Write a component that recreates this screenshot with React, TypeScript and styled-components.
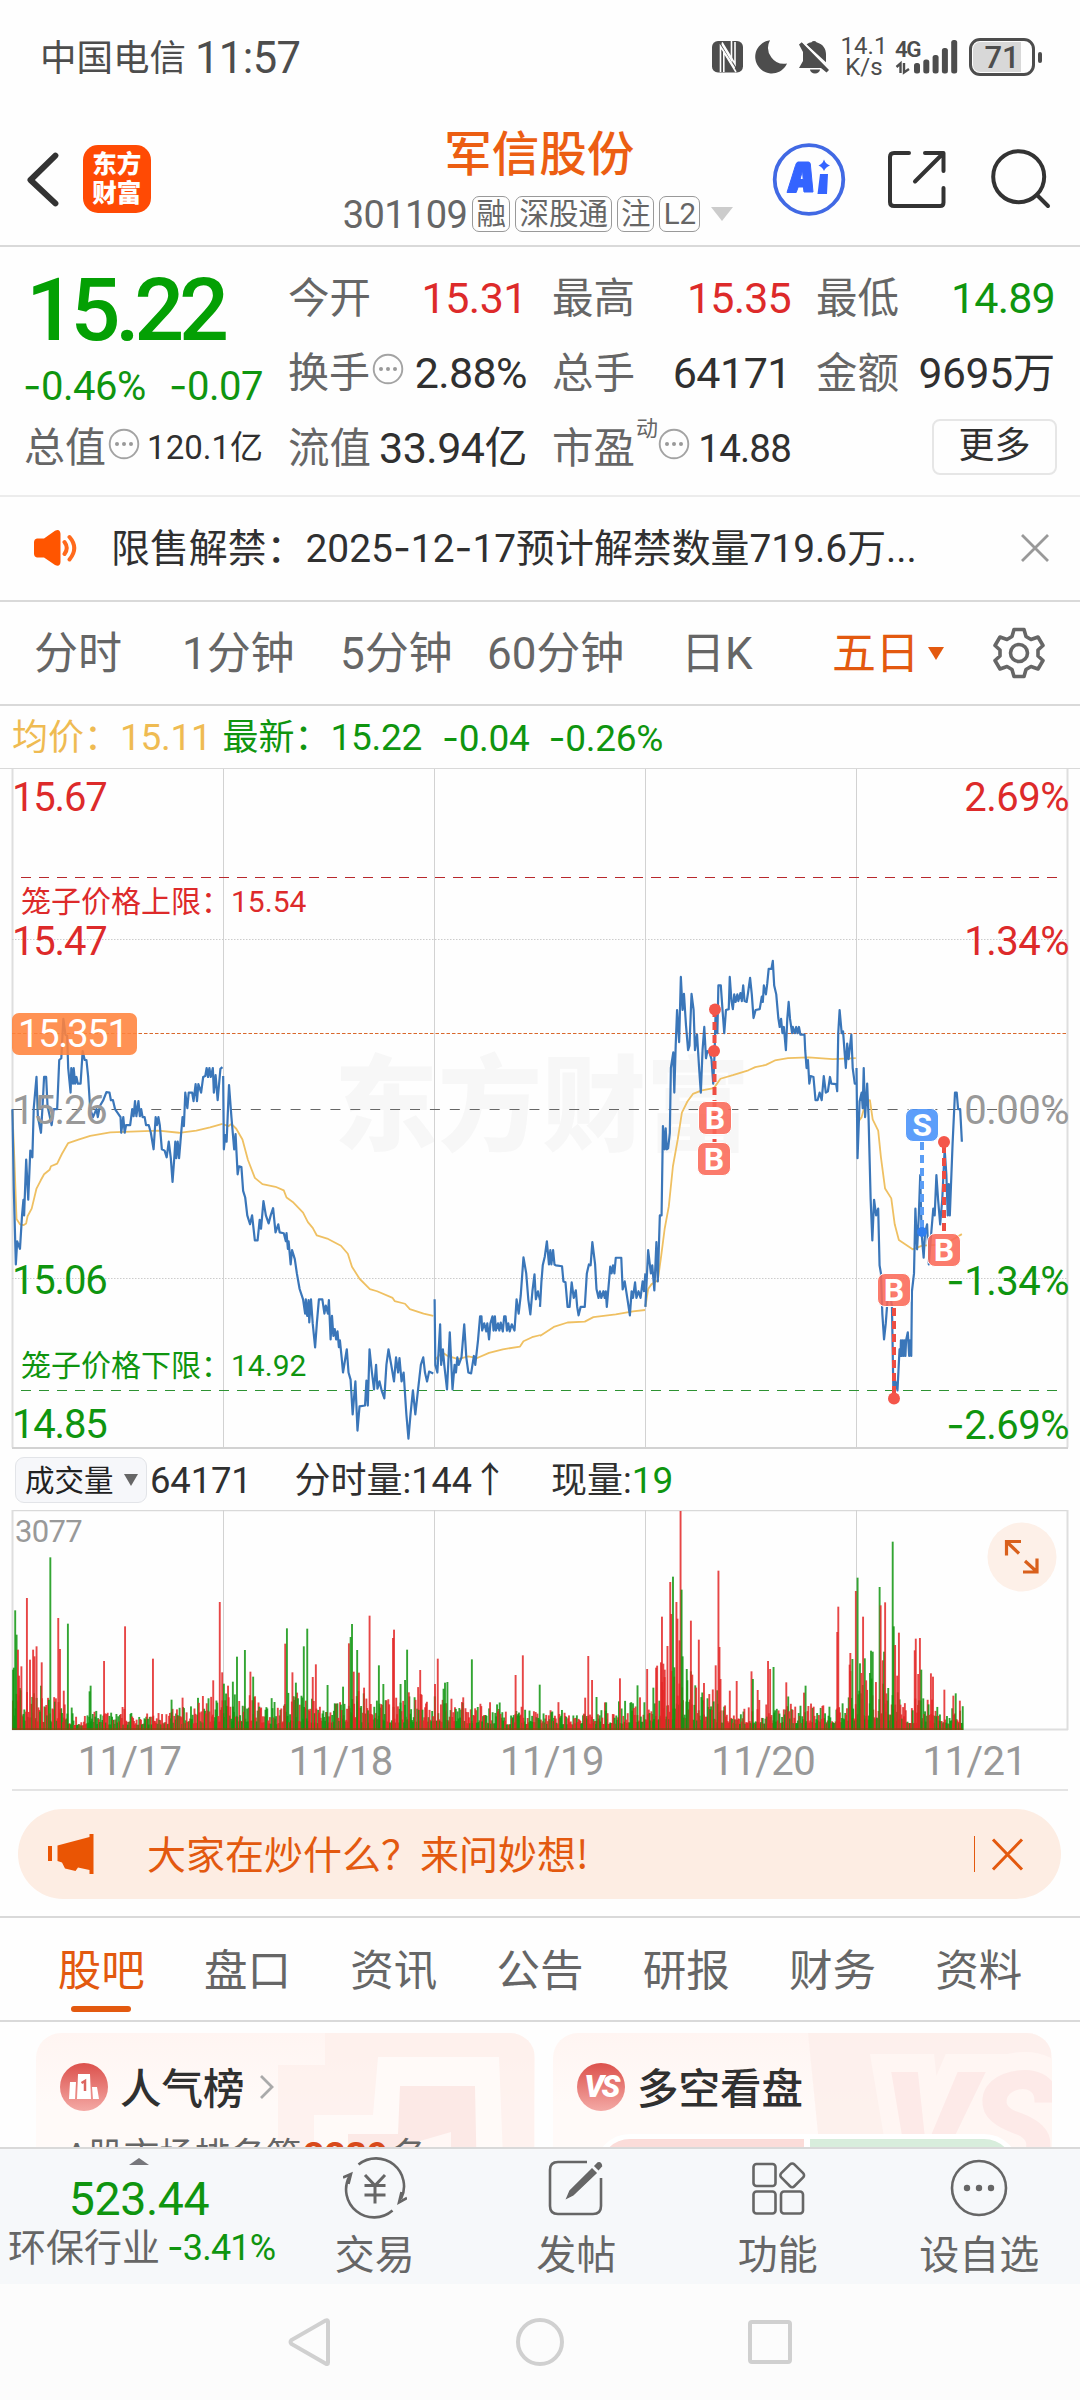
import React from "react";
import styled, { createGlobalStyle } from "styled-components";

const RED = "#dd2a2a";
const GREEN = "#0f950f";
const ORANGE = "#e3590f";
const GREY = "#666";
const DARK = "#303030";
const LINE = "#d9d9d9";

const Global = createGlobalStyle`
  html, body { margin: 0; padding: 0; background: #fefefe; }
  * { box-sizing: border-box; }
`;

const Page = styled.div`
  width: 1080px;
  height: 2400px;
  overflow: hidden;
  display: flex;
  flex-direction: column;
  background: #fefefe;
  font-family: Roboto, "Noto Sans CJK SC", sans-serif;
  color: ${DARK};
  line-height: 1;
  white-space: nowrap;
`;

const Txt = styled.span<{ s: number; c?: string; ls?: number; w?: number; ml?: number }>`
  font-size: ${(p) => p.s}px;
  color: ${(p) => p.c || "inherit"};
  letter-spacing: ${(p) => p.ls || 0}px;
  font-weight: ${(p) => p.w || 400};
  margin-left: ${(p) => p.ml || 0}px;
  padding-top: 3px;
  line-height: 1.1;
  white-space: pre;
`;

const Dash = styled.span`
  font-family: Inter, sans-serif;
`;

const withDashes = (t: string) =>
  t.split(/(-)/).map((p, i) => (p === "-" ? <Dash key={i}>-</Dash> : p));

type TProps = { children: string; s: number; c?: string; ls?: number; w?: number; ml?: number };
const T = ({ children, ...rest }: TProps) => <Txt {...rest}>{withDashes(children)}</Txt>;

/* ---------- status bar ---------- */

const StatusBar = styled.div`
  height: 115px;
  padding: 0 38px 0 40px;
  display: flex;
  align-items: center;
  justify-content: space-between;
  color: #4d4d4d;
`;
const StatusSide = styled.div`
  display: flex;
  align-items: center;
`;
const Speed = styled.div`
  width: 40px;
  height: 42px;
  margin-left: 13px;
  display: flex;
  flex-direction: column;
  align-items: center;
  justify-content: space-between;
  font-size: 24px;
  line-height: 21px;
`;
const Signal = styled.div`
  width: 64px;
  height: 36px;
  margin-left: 11px;
  position: relative;
`;
const SignalText = styled.span`
  position: absolute;
  left: 0;
  top: -1px;
  font-size: 22.5px;
  font-weight: 600;
  letter-spacing: -1.5px;
  line-height: 22px;
`;
const Battery = styled.div`
  width: 66px;
  height: 38px;
  margin-left: 10px;
  border: 3px solid #4d4d4d;
  border-radius: 11px;
  padding: 1px;
`;
const BatteryFill = styled.div`
  height: 100%;
  border-radius: 7px;
  background: linear-gradient(90deg, #d8d8d8 83%, transparent 83%);
  display: flex;
  align-items: center;
  justify-content: center;
  font-size: 31px;
  font-weight: 500;
`;
const BatteryNub = styled.div`
  width: 4px;
  height: 11px;
  margin-left: 3px;
  border-radius: 2px;
  background: #4d4d4d;
`;

/* ---------- header ---------- */

const Header = styled.header`
  height: 132px;
  border-bottom: 2px solid ${LINE};
  display: flex;
  align-items: flex-start;
  padding: 0 25px 0 27px;
`;
const Logo = styled.div`
  width: 68px;
  height: 68px;
  margin: 30px 0 0 24px;
  border-radius: 15px;
  background: #ff4a04;
  color: #fff;
  font-size: 24.5px;
  line-height: 29px;
  font-weight: 900;
  display: flex;
  flex-direction: column;
  align-items: center;
  justify-content: center;
`;
const TitleBlock = styled.div`
  width: 430px;
  margin: 13px 0 0 170px;
  display: flex;
  flex-direction: column;
  align-items: center;
`;
const StockName = styled.div`
  height: 54px;
  font-size: 47.5px;
  line-height: 54px;
  font-weight: 500;
  color: #ec5e12;
  margin-left: 9px;
`;
const CodeRow = styled.div`
  height: 36px;
  margin-top: 14px;
  margin-left: 8px;
  width: 392px;
  display: flex;
  align-items: center;
  gap: 5px;
`;
const Badge = styled.span<{ w: number }>`
  width: ${(p) => p.w}px;
  height: 36px;
  border: 1px solid #999;
  border-radius: 7px;
  color: ${GREY};
  font-size: 29.5px;
  line-height: 35px;
  text-align: center;
`;
const DownCaret = styled.span<{ w: number; h: number; c: string; ml: number }>`
  width: 0;
  height: 0;
  margin-left: ${(p) => p.ml}px;
  border-left: ${(p) => p.w / 2}px solid transparent;
  border-right: ${(p) => p.w / 2}px solid transparent;
  border-top: ${(p) => p.h}px solid ${(p) => p.c};
`;

/* ---------- quote ---------- */

const Quote = styled.section`
  height: 250px;
  padding: 13px 25px 0 26px;
  border-bottom: 2px solid #ececec;
  display: grid;
  grid-template-columns: 237px 238px 238px 238px;
  column-gap: 26px;
`;
const QuoteCol = styled.div`
  display: flex;
  flex-direction: column;
`;
const QuoteRow = styled.div<{ h?: number }>`
  height: ${(p) => p.h || 75}px;
  display: flex;
  align-items: center;
  justify-content: space-between;
`;
const LabelBox = styled.div`
  display: flex;
  align-items: center;
  margin-left: -1px;
`;
const Sup = styled.span`
  align-self: flex-start;
  font-size: 22px;
  color: ${GREY};
  line-height: 22px;
  margin: -5px -2px 0 1px;
`;
const MoreButton = styled.button`
  width: 125px;
  height: 56px;
  margin: 0 -2px 0 auto;
  border: 2px solid #e6e6e6;
  border-radius: 8px;
  background: #fefefe;
  font: 400 36px/40px Roboto, "Noto Sans CJK SC", sans-serif;
  color: ${DARK};
  padding: 0 0 3px;
`;

/* ---------- notice / tabs / legend ---------- */

const Notice = styled.section`
  height: 105px;
  border-bottom: 2px solid ${LINE};
  padding: 0 31px 0 33px;
  display: flex;
  align-items: center;
`;
const NoticeText = styled.div`
  flex: 1;
  margin-left: 32px;
  font-size: 38.9px;
  line-height: 48px;
`;
const PeriodTabs = styled.nav`
  height: 104px;
  border-bottom: 2px solid ${LINE};
  padding: 0 36px 0 34px;
  display: flex;
  align-items: center;
`;
const Period = styled.div<{ w: number; on?: boolean }>`
  width: ${(p) => p.w}px;
  flex: none;
  display: flex;
  align-items: center;
  padding-top: 2px;
  font-size: 44px;
  letter-spacing: ${(p) => (p.on ? -0.6 : -0.1)}px;
  font-weight: 400;
  color: ${(p) => (p.on ? ORANGE : GREY)};
`;
const Legend = styled.div`
  height: 62px;
  padding: 1px 12px 0;
  display: flex;
  align-items: center;
`;

/* ---------- charts ---------- */

const ChartBox = styled.section`
  position: relative;
  height: 681px;
`;
const AxisLabel = styled.span<{ y: number; c: string; side?: "l" | "r"; x?: number; s?: number }>`
  position: absolute;
  top: ${(p) => p.y - 768 - 20.5}px;
  ${(p) => (p.side === "r" ? `right: ${p.x ?? 11}px;` : `left: ${p.x ?? 12}px;`)}
  font-size: ${(p) => p.s || 40}px;
  letter-spacing: ${(p) => (p.s ? 0 : p.side === "r" ? -0.5 : -1.2)}px;
  line-height: 44px;
  color: ${(p) => p.c};
`;
const PriceTag = styled.span`
  position: absolute;
  left: 12px;
  top: 245px;
  width: 125px;
  height: 42px;
  border-radius: 7px;
  background: rgba(255, 131, 60, 0.88);
  color: #fff;
  font-size: 38px;
  letter-spacing: -1.2px;
  line-height: 43px;
  padding-left: 6px;
`;
const Watermark = styled.span`
  position: absolute;
  left: 334px;
  top: 285px;
  font-size: 104px;
  line-height: 110px;
  font-weight: 900;
  color: #f7f7f7;
`;
const Trade = styled.span<{ x: number; y: number; buy?: boolean }>`
  position: absolute;
  left: ${(p) => p.x}px;
  top: ${(p) => p.y - 768}px;
  width: 34px;
  height: 34px;
  border: 1px solid #fff;
  border-radius: 8px;
  background: ${(p) => (p.buy ? "rgba(250,105,88,.88)" : "rgba(75,148,250,.9)")};
  color: #fff;
  font: 700 32px/33px Roboto, sans-serif;
  text-align: center;
`;
const VolumeHead = styled.div`
  height: 62px;
  padding: 1px 0 0 15px;
  display: flex;
  align-items: center;
`;
const VolumeSelect = styled.button`
  width: 132px;
  height: 46px;
  border: 1.5px solid #e2e4e8;
  border-radius: 9px;
  background: #f6f7fa;
  padding: 0 0 3px 9px;
  display: flex;
  align-items: center;
  font: 400 29.5px/36px "Noto Sans CJK SC", sans-serif;
  color: #222;
`;
const SelectCaret = styled.i`
  margin: 3px 0 0 10px;
  border-left: 7.5px solid transparent;
  border-right: 7.5px solid transparent;
  border-top: 12px solid #666;
`;
const VolumeBox = styled.div`
  position: relative;
  height: 221px;
`;
const VolumeMax = styled.span`
  position: absolute;
  left: 15px;
  top: 5px;
  font-size: 31px;
  line-height: 34px;
  letter-spacing: -0.7px;
  color: #999;
`;
const Expand = styled.svg`
  position: absolute;
  left: 987px;
  top: 12px;
`;
const Dates = styled.div`
  height: 60px;
  margin: 0 0 0 12px;
  padding: 2px 0 0 12px;
  display: flex;
  align-items: center;
  color: #999;
  font-size: 40px;
`;
const DateCell = styled.span`
  flex: 1;
  text-align: center;
  letter-spacing: -0.5px;
`;
const DateRule = styled.div`
  height: 2px;
  margin: -2px 12px 0;
  background: #e4e4e4;
`;

/* ---------- banner and content tabs ---------- */

const Banner = styled.section`
  height: 90px;
  margin: 18px 19px 17px 18px;
  border-radius: 45px;
  background: #fdede3;
  padding: 0 37px 0 29px;
  display: flex;
  align-items: center;
  color: ${ORANGE};
`;
const BannerText = styled.div`
  flex: 1;
  margin-left: 52px;
  font-size: 39px;
  line-height: 46px;
  font-family: "Noto Sans CJK SC", sans-serif;
  padding-bottom: 4px;
`;
const BannerRule = styled.span`
  width: 1px;
  height: 36px;
  margin-right: 16px;
  background: ${ORANGE};
`;
const ContentTabs = styled.nav`
  height: 106px;
  border-top: 2px solid ${LINE};
  border-bottom: 2px solid ${LINE};
  padding: 0 28px;
  display: flex;
`;
const ContentTab = styled.div<{ on?: boolean }>`
  flex: 1;
  display: flex;
  flex-direction: column;
  align-items: center;
  padding-top: 29px;
  font-size: 43.5px;
  line-height: 50px;
  color: ${(p) => (p.on ? ORANGE : GREY)};
`;
const Underline = styled.i`
  width: 60px;
  height: 6px;
  margin-top: 9px;
  border-radius: 3px;
  background: ${ORANGE};
`;
const Cards = styled.section`
  height: 125px;
  overflow: hidden;
  padding: 11px 28px 0 36px;
  display: flex;
  gap: 18px;
`;
const Card = styled.article`
  flex: 1;
  height: 200px;
  position: relative;
  overflow: hidden;
  border-radius: 25px;
  background: linear-gradient(180deg, #fff5f2 0, #fffaf8 70px);
  padding: 29px 24px 0;
`;
const CardArt = styled.svg`
  position: absolute;
  inset: 0;
`;
const CardHead = styled.div`
  position: relative;
  height: 50px;
  display: flex;
  align-items: center;
`;
const CardTitle = styled.span`
  font-size: 41.5px;
  line-height: 50px;
  font-weight: 500;
  margin: -3px 14px 0 12px;
  font-family: "Noto Sans CJK SC", sans-serif;
`;
const RankLine = styled.div`
  position: relative;
  margin: 23px 0 0 5px;
  font-size: 35.5px;
  line-height: 42px;
  color: ${GREY};
`;
const RankNumber = styled.b`
  color: #d84a1b;
  font-weight: 700;
  margin: 0 3px 0 2px;
  font-size: 37px;
`;
const VoteBar = styled.div`
  position: relative;
  height: 70px;
  width: 424px;
  margin: 22px 0 0 18px;
  border: 5px solid #fff;
  border-radius: 40px;
  background: #fff;
  overflow: hidden;
  display: flex;
  gap: 6px;
`;
const VoteHalf = styled.div<{ c: string }>`
  flex: 1;
  background: ${(p) => p.c};
`;
const Disc = styled.span`
  width: 48px;
  height: 48px;
  border-radius: 50%;
  background: linear-gradient(180deg, #dc514c, #f4a9a5);
  display: flex;
  align-items: center;
  justify-content: center;
  color: #fff;
  font: italic 900 31px/48px Roboto, sans-serif;
  letter-spacing: -2.5px;
`;
const VsGhost = styled.span`
  position: absolute;
  right: 0;
  top: 21px;
  font: italic 900 146px/146px Roboto, sans-serif;
  letter-spacing: -6px;
  color: #fdeae8;
  -webkit-text-stroke: 36px #fff6f3;
  paint-order: stroke fill;
`;

/* ---------- bottom ---------- */

const ActionBar = styled.footer`
  height: 137px;
  border-top: 2px solid ${LINE};
  background: #f6f8fa;
  display: flex;
`;
const Industry = styled.div`
  width: 274px;
  display: flex;
  flex-direction: column;
  align-items: center;
`;
const UpCaret = styled.span`
  width: 0;
  height: 0;
  margin: 9px 0 0 3px;
  border-left: 10.5px solid transparent;
  border-right: 10.5px solid transparent;
  border-bottom: 7px solid #77777c;
`;
const IndustryValue = styled.div`
  margin: 9px 0 0 4px;
  font-size: 46.5px;
  letter-spacing: -0.4px;
  line-height: 50px;
  color: ${GREEN};
`;
const IndustryRow = styled.div`
  height: 46px;
  padding-left: 8px;
  align-self: flex-start;
  display: flex;
  align-items: center;
`;
const Action = styled.div`
  flex: 1;
  display: flex;
  flex-direction: column;
  align-items: center;
  padding-top: 7px;
  font-size: 40px;
  line-height: 48px;
  color: ${GREY};
`;
const ActionText = styled.span`
  margin-top: 8px;
  font-family: "Noto Sans CJK SC", sans-serif;
`;
const SystemNav = styled.div`
  height: 116px;
  background: #fcfcfc;
  display: flex;
  justify-content: center;
  align-items: center;
  gap: 180px;
  padding-right: 1px;
`;

/* ---------- data ---------- */

/* Price and average traces, each half digitised on its own 1568-unit grid. */
const PRICE_LEFT = [
  "36,782 40,960 46,1130 50,1078 58,1095 64,1020 68,985 70,1020 76,895 82,985 88,875 94,890 98,780 106,710 110,800 119,835 124,770 128,710 134,710 138,775 150,818 156,782 166,782 172,672 178,668 184,580 190,615 195,618 198,690 205,745 207,690 212,725 214,690 218,725 222,710 226,725 234,725 240,652 246,672 251,672 256,710 262,782 270,800 280,782 284,800 290,775 300,762 309,744 318,745 322,762 328,762 334,782 350,800 352,835 358,800 362,835 366,818 378,818 384,782 388,798 392,764 396,798 402,764 406,798 410,782 414,800 420,800 424,818 432,818 438,835 446,872 452,800 456,818 460,800 464,818 470,872 478,875 484,890 490,855 496,892 501,945 506,892 509,855 512,892 516,855 520,892 524,855 530,800 534,820 538,745 544,780 548,745 558,745 562,764 568,726 572,764 576,726 584,745 590,710 596,708 600,690 604,710 608,690 612,710 618,690 621,745 626,706 632,762 640,692 646,688",
  "648,708 650,872 654,840 658,855 665,728 672,800 680,872 684,838 690,928 694,910 701,912 706,965 712,980 718,1020 726,1040 732,1020 740,1076 748,1076 754,1030 758,1050 765,988 772,1020 780,1038 786,1020 793,1004 800,1058 808,1040 812,1058 824,1060 830,1078 832,1060 836,1095 838,1078 844,1130 848,1098 856,1118 862,1150 870,1185 880,1208 886,1240 888,1208 892,1245 896,1210 898,1260 903,1208 908,1262 915,1316 920,1262 926,1208 936,1208 942,1240 946,1222 952,1240 955,1210 960,1298 964,1245 968,1290 972,1275 976,1298 980,1280 984,1315 987,1300 992,1338 996,1372 1007,1320 1012,1372 1018,1388 1024,1466 1032,1392 1038,1502 1044,1448 1060,1446 1064,1390 1068,1446 1073,1320 1080,1372 1086,1410 1092,1355 1096,1408 1102,1392 1108,1412 1116,1430 1122,1355 1128,1320 1136,1355 1144,1392 1150,1338 1156,1372 1160,1340 1166,1392 1172,1372 1180,1466 1186,1520 1192,1466 1199,1412 1206,1466 1214,1410 1222,1355 1229,1338 1234,1372 1240,1392 1246,1370 1258,1374",
  "1262,1208 1264,1355 1270,1372 1278,1264 1281,1355 1286,1320 1290,1355 1298,1410 1306,1282 1314,1410 1320,1355 1324,1372 1328,1338 1332,1355 1340,1338 1348,1264 1354,1338 1360,1372 1368,1374 1376,1335 1380,1355 1388,1300 1394,1246 1398,1246 1400,1278 1406,1262 1412,1280 1415,1262 1420,1298 1424,1262 1430,1246 1433,1278 1437,1246 1440,1278 1446,1262 1450,1278 1454,1260 1460,1280 1464,1246 1468,1246 1472,1278 1476,1262 1480,1280 1486,1264 1494,1278 1500,1208 1506,1240 1512,1200 1520,1114 1528,1150 1534,1208 1540,1242 1546,1190 1552,1152 1556,1208 1562,1190 1568,1210",
];
const AVG_LEFT = [
  "36,784 42,900 48,1028 58,1040 68,1042 76,1038 80,1022 92,1005 106,960 118,942 128,928 144,918 148,910 166,904 180,882 198,858 230,850 262,842 320,834 400,832 460,830 520,835 570,830 610,823 646,815",
  "648,816 664,820 672,815 686,826 704,850 720,896 740,936 762,950 800,956 824,964 832,980 850,990 880,1014 894,1035 908,1048 920,1065 950,1072 990,1088 1010,1106 1022,1135 1044,1162 1074,1185 1095,1190 1140,1205 1146,1212 1176,1218 1190,1230 1230,1240 1258,1245",
  "1262,1345 1276,1333 1286,1328 1300,1335 1330,1342 1360,1336 1384,1340 1420,1328 1460,1320 1510,1314 1520,1302 1545,1293 1570,1288",
];
const PRICE_RIGHT = [
  "0,1225 4,1170 8,1132 14,1112 20,1078 26,1130 30,1098 33,1130 38,1098 42,1130 46,1132 64,1134 68,1168 74,1170 80,1225 86,1225 92,1170 98,1205 104,1188 108,1225 112,1244 118,1225 130,1225 136,1150 142,1130 147,1132 152,1080 160,1130 164,1185 170,1205 174,1190 178,1205 184,1190 188,1205 191,1190 194,1225 204,1135 208,1150 212,1132 216,1150 220,1115 236,1115 240,1186 246,1168 254,1208 261,1244 266,1190 270,1205 276,1170 280,1205 286,1190 292,1205 298,1168 302,1190 306,1150",
  "306,1225 314,1098 322,1150 326,1132 332,1188 338,1080 342,1168 348,1020 353,1020 357,820 362,872 365,825 368,872 372,870 377,835 380,690 384,670 387,655 390,745 394,640 398,560 404,632 409,486 414,560 418,524 424,595 430,650 434,640 440,524 446,560 450,650 456,615 462,690 467,745 472,650 477,598 482,668 486,652 492,655 498,670 503,725 507,655 510,560 515,612 518,505 525,505 530,560 535,612 540,560 548,558 551,486 556,540 560,558 564,525 568,542 573,525 576,540 582,522 586,540 590,505 594,540 600,542 604,522 610,488 615,525 620,578 626,560 638,558 644,530 647,542 650,505 656,525 660,500 664,468 672,468 676,450 680,505 686,525 692,578 696,598 700,580 704,612 708,598 714,650 718,580 722,542 726,580 732,612 734,598 740,612 744,598 748,612 752,598 756,615 768,615 770,650 774,690 778,672 782,725 786,708 794,710 800,762 806,762 812,745 818,762 824,708 830,745 836,742 842,710 846,725 860,726 863,742 866,612 870,560 876,612 880,608 884,650 888,690 892,635 896,670 904,615 908,690 914,725 919,725",
  "919,690 922,892 928,765 934,745 937,780 940,690 944,800 950,725 954,800 960,982 965,1076 970,985 976,1020 982,1005 986,1132 990,1150 994,1240 999,1298 1004,1262 1010,1200 1016,1190 1022,1225 1026,1410 1032,1392 1038,1412 1044,1320 1047,1335 1048,1300 1051,1335 1053,1300 1056,1335 1058,1300 1061,1335 1063,1300 1068,1282 1072,1335 1074,1300 1078,1335 1080,1190 1086,1150 1090,1005 1095,1096 1100,1020 1104,930 1108,1060 1114,1115 1118,1060 1124,1040 1129,1130 1136,1060 1142,1005 1146,1020 1151,930 1156,985 1162,1040 1168,985 1175,872 1180,930 1184,1020 1187,950 1190,1020 1198,860 1205,745 1210,745 1214,782 1220,782 1225,855",
];
const AVG_RIGHT = [
  "0,1290 40,1270 80,1260 130,1258 155,1248 220,1242 270,1235 305,1232",
  "306,1225 314,1185 324,1174 342,1166 352,1110 362,1050 374,1000 386,910 400,850 412,790 428,765 444,748 470,740 505,735 524,714 560,706 605,695 625,688 656,683 682,673 720,668 780,666 850,670 917,668",
  "920,815 934,800 946,765 958,762 966,805 982,830 990,890 1002,960 1020,982 1030,1040 1042,1075 1082,1096 1110,1088 1150,1086 1190,1078 1225,1062",
];

/* Tall volume bars: [x, top, colour], grid of 2.9037 by 3 units per pixel. */
const R = 0, G = 1;
const PEAKS_LEFT: number[][] = [
  [38, 690, G], [40, 684, G], [44, 512, G], [48, 585, G], [52, 630, R], [55, 708, R], [62, 680, R], [78, 475, R], [87, 660, R], [96, 630, R], [100, 650, R], [106, 620, R], [121, 668, R], [146, 353, G], [169, 535, R], [174, 628, R], [185, 753, R], [197, 552, G], [263, 738, G], [260, 755, G], [302, 664, R], [363, 560, R], [444, 657, R], [498, 780, G], [530, 774, R], [589, 769, R], [619, 722, R], [638, 487, R], [645, 698, R], [650, 732, G], [662, 738, R], [676, 726, G], [688, 651, G], [711, 631, G], [727, 696, R], [735, 711, G], [797, 787, G], [828, 612, R], [833, 566, G], [849, 698, R], [859, 729, G], [882, 620, G], [892, 567, G], [908, 712, R], [917, 674, R], [951, 736, G], [996, 741, G], [1013, 611, R], [1018, 592, G], [1022, 553, G], [1027, 696, R], [1037, 631, G], [1042, 699, R], [1057, 744, R], [1073, 528, R], [1100, 677, G], [1113, 733, G], [1141, 595, R], [1144, 570, R], [1163, 733, G], [1176, 721, G], [1182, 630, G], [1187, 758, R], [1220, 691, R], [1263, 733, R], [1271, 657, R], [1292, 729, G], [1299, 727, G], [1345, 773, R], [1370, 659, G], [1497, 706, R], [1518, 647, R], [1567, 735, G],
];
const PEAKS_RIGHT: number[][] = [
  [140, 649, R], [151, 721, R], [131, 774, R], [164, 772, G], [192, 788, G], [232, 716, R], [283, 737, G], [311, 688, R], [329, 744, G], [337, 684, R], [340, 678, R], [354, 531, R], [351, 668, R], [358, 672, R], [362, 690, R], [370, 619, R], [378, 427, R], [381, 523, R], [386, 411, G], [390, 683, G], [396, 487, R], [399, 537, R], [405, 602, R], [408, 214, R], [411, 450, G], [414, 650, G], [426, 688, G], [438, 543, R], [442, 705, R], [461, 600, R], [476, 730, R], [510, 677, R], [518, 393, R], [521, 622, R], [524, 718, R], [551, 753, R], [571, 724, R], [614, 695, R], [618, 718, G], [632, 751, R], [662, 664, R], [668, 688, R], [678, 682, G], [715, 728, R], [771, 738, G], [866, 501, R], [863, 577, R], [899, 675, R], [901, 640, R], [907, 658, G], [917, 454, R], [922, 414, G], [929, 671, G], [933, 700, R], [938, 531, R], [943, 656, G], [947, 722, R], [958, 700, G], [961, 633, G], [966, 636, G], [986, 442, G], [989, 497, R], [995, 662, R], [999, 636, G], [1002, 488, R], [1011, 745, G], [1024, 306, G], [1027, 560, G], [1031, 616, R], [1037, 708, R], [1042, 579, R], [1088, 632, R], [1091, 597, R], [1098, 703, R], [1103, 595, R], [1107, 690, G], [1135, 701, R], [1141, 711, R], [1174, 750, R], [1200, 768, R], [1207, 761, G], [1219, 783, R],
];

type Bar = { x: number; h: number; c: string };
const COLOURS = ["#e32626", "#0f950f"];

/* Typical bar height along the time axis, as [x, height] stops in pixels. */
const LEVEL: number[][] = [[12, 48], [40, 34], [60, 30], [70, 16], [80, 8], [90, 16], [130, 15], [150, 14], [180, 20], [215, 32], [235, 38], [255, 34], [275, 18], [295, 38], [320, 24], [345, 34], [375, 28], [400, 30], [430, 36], [460, 26], [480, 24], [510, 15], [540, 22], [575, 14], [600, 18], [620, 22], [650, 34], [665, 52], [690, 48], [715, 28], [735, 20], [780, 22], [810, 28], [830, 20], [850, 42], [875, 52], [895, 38], [910, 24], [925, 34], [945, 18], [962, 26]];
const levelAt = (x: number) => {
  for (let i = 1; i < LEVEL.length; i++) {
    if (x <= LEVEL[i][0]) {
      const [x0, a] = LEVEL[i - 1];
      const [x1, b] = LEVEL[i];
      return a + ((b - a) * (x - x0)) / (x1 - x0);
    }
  }
  return 20;
};
const BARS: Bar[] = (() => {
  let seed = 7;
  const rnd = () => {
    seed = (seed * 16807) % 2147483647;
    return seed / 2147483647;
  };
  const out: Bar[] = [];
  for (let x = 12; x < 962; x += 0.877) {
    const r = rnd();
    out.push({ x, h: 3 + levelAt(x) * (0.15 + 0.85 * r * r + (rnd() > 0.88 ? 0.4 : 0)), c: COLOURS[rnd() > 0.55 ? 1 : 0] });
  }
  const add = (list: number[][], off: number) =>
    list.forEach(([x, y, k]) => out.push({ x: off + x / 2.9037 - 0.9, h: (871 - y) / 3, c: COLOURS[k] }));
  add(PEAKS_LEFT, 0);
  add(PEAKS_RIGHT, 540);
  return out;
})();

const DAY_LINES = [223.5, 434.5, 645.5, 856.5];

/* ---------- small drawings ---------- */

const DotsIcon = styled.svg`
  margin: 0 0 6px 2px;
`;
const Dots = () => (
  <DotsIcon width="32" height="32" viewBox="-16 -16 32 32">
    <circle r="14.3" fill="none" stroke="#a3a3a3" strokeWidth="1.9" />
    <g fill="#999"><circle cx="-7" r="2" /><circle r="2" /><circle cx="7" r="2" /></g>
  </DotsIcon>
);

const ChartSvg = styled.svg`
  position: absolute;
  left: 0;
  top: 0;
`;
const BackIcon = styled.svg`
  margin-top: 37px;
`;
const HeaderIcons = styled.svg`
  flex: none;
  margin: 25px 0 0 16px;
`;
const GearIcon = styled.svg`
  flex: none;
  margin-left: 1px;
`;

const Trace = ({ list, c, w }: { list: string[]; c: string; w: number }) => (
  <>
    {list.map((p, i) => (
      <polyline key={i} points={p} fill="none" stroke={c} strokeWidth={w} strokeLinejoin="round" vectorEffect="non-scaling-stroke" />
    ))}
  </>
);

const Stem = ({ x, a, b, c }: { x: number; a: number; b: number; c: string }) => (
  <line x1={x} x2={x} y1={a} y2={b} stroke={c} strokeWidth="4" strokeDasharray="8 5" />
);

const PriceChart = () => (
  <ChartSvg width="1080" height="681" viewBox="0 768 1080 681">
    <line x1="0" x2="1080" y1="768.5" y2="768.5" stroke={LINE} />
    <g stroke="#d2d2d2" strokeWidth="1">
      {DAY_LINES.map((x) => <line key={x} x1={x} x2={x} y1="769" y2="1447" />)}
    </g>
    <path d="M12.5 769V1447.5M1067.5 769V1447.5" stroke="#dedede" strokeWidth="2" />
    <line x1="12" x2="1068" y1="1448" y2="1448" stroke="#d2d2d2" strokeWidth="2" />
    <path d="M12 939.5H1068M12 1278.5H1068" stroke="#ccc" strokeDasharray="1.5 1.5" />
    <line x1="21" x2="1058" y1="877.5" y2="877.5" stroke="#b8282c" strokeDasharray="10 8" />
    <line x1="21" x2="1058" y1="1390.5" y2="1390.5" stroke="#2d9232" strokeDasharray="10 8" />
    <line x1="12" x2="1062" y1="1109.500" y2="1109.500" stroke="#666" strokeDasharray="10 9.900" />
    <line x1="12" x2="1068" y1="1033.500" y2="1033.500" stroke="#d9682c" strokeDasharray="3.500 2" />
    <g transform="translate(0 760) scale(.34439 .44643)">
      <Trace list={AVG_LEFT} c="#efc062" w={1.8} />
      <Trace list={PRICE_LEFT} c="#3a76b9" w={2.2} />
    </g>
    <g transform="translate(540 760) scale(.34439 .44643)">
      <Trace list={AVG_RIGHT} c="#efc062" w={1.8} />
      <Trace list={PRICE_RIGHT} c="#3a76b9" w={2.2} />
    </g>
    <Stem x={714.5} a={1009} b={1142} c="#ee4d42" />
    <Stem x={894} a={1308} b={1394} c="#ee4d42" />
    <Stem x={944} a={1145} b={1234} c="#ee4d42" />
    <Stem x={922} a={1142} b={1230} c="#5a9df5" />
    <g fill="#f4564a">
      <circle cx="715" cy="1009.5" r="6" />
      <circle cx="714" cy="1051" r="6" />
      <circle cx="894" cy="1398.5" r="6" />
      <circle cx="944" cy="1142" r="6" />
    </g>
    <circle cx="922" cy="1232" r="5" fill="#2f7ef0" />
  </ChartSvg>
);

const VolumeChart = () => (
  <ChartSvg width="1080" height="221" viewBox="0 0 1080 221">
    <path d="M12 .5H1068" stroke="#d9d9d9" strokeWidth="1.5" />
    <path d="M12.5 0V220M1067.5 0V220M12 219.5H1068" stroke="#dedede" strokeWidth="2" fill="none" />
    {DAY_LINES.map((x) => <line key={x} x1={x} x2={x} y1="0" y2="220" stroke="#d2d2d2" />)}
    {BARS.map((b, i) => <rect key={i} x={b.x} y={220 - b.h} width="1.9" height={b.h} fill={b.c} fillOpacity={0.85} />)}
    <rect x="12" y="218" width="951" height="2" fill="#7d4a12" fillOpacity=".6" />
  </ChartSvg>
);

const BOTTOM_ICON = { width: 64, height: 64, viewBox: "-32 -32 64 64", fill: "none", stroke: "#666", strokeWidth: 2.6 } as const;

const App = () => (
  <Page>
    <Global />
    <StatusBar>
      <StatusSide>
        <T s={36.5}>中国电信</T>
        <T s={43.5} ls={-0.6} ml={9}>11:57</T>
      </StatusSide>
      <StatusSide>
        <svg width="120" height="36" viewBox="713 41 120 36">
          <rect x="714" y="43" width="31" height="31.5" rx="6" fill="#4d4d4d" />
          <path d="M722.5 74V48.5L736.5 70M724 44.5L737 66V44" fill="none" stroke="#fefefe" strokeWidth="1.6" />
          <path d="M725.8 74V54L738 74M733.5 43V62L724 46" fill="none" stroke="#fefefe" strokeWidth="1.6" />
          <path d="M772 42.3a16.6 16.6 0 1 0 17 23.2A16 16 0 0 1 772 42.3z" fill="#4d4d4d" />
          <path d="M801 46.5l2.8-2.3L831 72l-2.5 2.6L823 70h-22l4-7V54l-4-7.5z" fill="#4d4d4d" />
          <path d="M808.5 46.5c2-1.5 3.5-2 5-2.2a3 3 0 0 1 5 0c7 2 9.5 7 9.5 12v8zM812 71.5h10a5 4 0 0 1-10 0z" fill="#4d4d4d" />
          <path d="M804.5 43.5L831 70" stroke="#fefefe" strokeWidth="1.5" />
        </svg>
        <Speed><span>14.1</span><span>K/s</span></Speed>
        <Signal>
          <SignalText>4G</SignalText>
          <svg width="64" height="36" viewBox="895 40 64 36">
            <path d="M896.5 68l4-3.5V74M904 64v9.5l5-3.5" stroke="#4d4d4d" strokeWidth="2.4" fill="none" />
            <g fill="#4d4d4d">
              <rect x="914" y="64" width="6" height="10.5" rx="2.5" />
              <rect x="923.3" y="60.5" width="6" height="14" rx="2.5" />
              <rect x="932.6" y="56" width="6" height="18.5" rx="2.5" />
              <rect x="941.9" y="49" width="6" height="25.5" rx="2.5" />
              <rect x="951.2" y="41" width="6" height="33.5" rx="2.5" />
            </g>
          </svg>
        </Signal>
        <Battery><BatteryFill>71</BatteryFill></Battery>
        <BatteryNub />
      </StatusSide>
    </StatusBar>

    <Header>
      <BackIcon width="32" height="56" viewBox="0 0 32 56">
        <path d="M28.5 3.5L3.5 28L28.5 51.5" fill="none" stroke="#333" strokeWidth="6" strokeLinecap="round" strokeLinejoin="round" />
      </BackIcon>
      <Logo><span>东方</span><span>财富</span></Logo>
      <TitleBlock>
        <StockName>军信股份</StockName>
        <CodeRow>
          <T s={38} ls={-0.6} c={GREY}>301109</T>
          <Badge w={38}>融</Badge>
          <Badge w={97}>深股通</Badge>
          <Badge w={37}>注</Badge>
          <Badge w={41}>L2</Badge>
          <DownCaret w={22} h={14} c="#ccc" ml={6} />
        </CodeRow>
      </TitleBlock>
      <HeaderIcons width="290" height="80" viewBox="765 140 290 80">
        <circle cx="809" cy="179.5" r="34.3" fill="none" stroke="#4169e4" strokeWidth="3.8" />
        <path fill="#3464ff" fillRule="evenodd" d="M798 162h10.5q1.5 0 1.8 2L813 192h-9l-.6-5h-5.2l-2 5.5H787l8.5-27q1-3.5 2.500-3.500zM802.500 170.500l-2.500 9h3.200z" stroke="#3464ff" strokeWidth="1" strokeLinejoin="round" />
        <path fill="#3464ff" d="M820 174h8l-1 20h-9.500zM824 159.500q1.500 4.500 6 6q-4.500 1.500-6 5.500q-1.500-4-5.500-5.500q4-1.500 5.500-6z" />
        <g fill="none" stroke="#333" strokeWidth="4" strokeLinecap="round" strokeLinejoin="round">
          <path d="M909 153H894q-4 0-4 4V202q0 4 4 4H940q3.500 0 3.500-3.500V188M925 153H943.500V171M943 153.500L915 181.500" />
          <circle cx="1018.700" cy="176.700" r="25.500" />
          <path d="M1037 195L1048 206" />
        </g>
      </HeaderIcons>
    </Header>

    <Quote>
      <QuoteCol>
        <QuoteRow h={98}><T s={88} w={500} c="#04a004" ls={-5.4}>15.22</T></QuoteRow>
        <QuoteRow h={54}><T s={40} c={GREEN} ls={-0.5} ml={-3}>-0.46%</T><T s={40} c={GREEN} ls={-0.5}>-0.07</T></QuoteRow>
        <QuoteRow h={70}>
          <LabelBox><T s={41} c={GREY} ml={-1}>总值</T><Dots /></LabelBox>
          <T s={33}>120.1亿</T>
        </QuoteRow>
      </QuoteCol>
      <QuoteCol>
        <QuoteRow><LabelBox><T s={41.5} c={GREY}>今开</T></LabelBox><T s={43} c={RED} ls={-0.5}>15.31</T></QuoteRow>
        <QuoteRow><LabelBox><T s={41} c={GREY}>换手</T><Dots /></LabelBox><T s={43} ls={-0.6}>2.88%</T></QuoteRow>
        <QuoteRow><LabelBox><T s={41.5} c={GREY}>流值</T></LabelBox><T s={43} ls={-0.5}>33.94亿</T></QuoteRow>
      </QuoteCol>
      <QuoteCol>
        <QuoteRow><LabelBox><T s={41.5} c={GREY}>最高</T></LabelBox><T s={43} c={RED} ls={-0.8}>15.35</T></QuoteRow>
        <QuoteRow><LabelBox><T s={41.5} c={GREY}>总手</T></LabelBox><T s={43} ls={-0.5}>64171</T></QuoteRow>
        <QuoteRow><LabelBox><T s={41.5} c={GREY}>市盈</T><Sup>动</Sup><Dots /></LabelBox><T s={38.5} ls={-0.8}>14.88</T></QuoteRow>
      </QuoteCol>
      <QuoteCol>
        <QuoteRow><LabelBox><T s={41.5} c={GREY}>最低</T></LabelBox><T s={43} c={GREEN} ls={-0.8}>14.89</T></QuoteRow>
        <QuoteRow><LabelBox><T s={41.5} c={GREY}>金额</T></LabelBox><T s={42.5} ls={-0.3}>9695万</T></QuoteRow>
        <QuoteRow><MoreButton>更多</MoreButton></QuoteRow>
      </QuoteCol>
    </Quote>

    <Notice>
      <svg width="46" height="38" viewBox="0 0 46 38">
        <path d="M4 9.5h7L22 1.8q5-2.5 5.5 3V33q-.5 5.500-5.500 3L11 28.500H4q-3-.500-3-4v-11q0-3.500 3-4z" fill="#ff5500" />
        <path d="M31.500 13q4.500 6 0 12M36.500 8q9.500 11 0 22.500" fill="none" stroke="#ff6a1c" strokeWidth="4" strokeLinecap="round" />
      </svg>
      <NoticeText>{withDashes("限售解禁：2025-12-17预计解禁数量719.6万...")}</NoticeText>
      <svg width="28" height="28" viewBox="0 0 28 28"><path d="M1 1L27 27M27 1L1 27" stroke="#999" strokeWidth="2.8" /></svg>
    </Notice>

    <PeriodTabs>
      <Period w={148}>分时</Period>
      <Period w={158}>1分钟</Period>
      <Period w={147}>5分钟</Period>
      <Period w={194}>60分钟</Period>
      <Period w={151}>日K</Period>
      <Period w={160} on>五日<DownCaret w={16} h={13} c={ORANGE} ml={9} /></Period>
      <GearIcon width="52" height="52" viewBox="-26 -26 52 52" fill="none" stroke="#666" strokeWidth="3.6">
        <path d="M-5 -23.5H5L7 -16.5L12 -13.5L19 -16L24 -7.5L19 -3V3L24 7.5L19 16L12 13.5L7 16.5L5 23.5H-5L-7 16.5L-12 13.5L-19 16L-24 7.5L-19 3V-3L-24 -7.5L-19 -16L-12 -13.5L-7 -16.5Z" strokeLinejoin="round" />
        <circle r="8.5" />
      </GearIcon>
    </PeriodTabs>

    <Legend>
      <T s={36} c="#efbb52">均价：</T>
      <T s={37} c="#efbb52" ls={-0.3}>15.11</T>
      <T s={36} c={GREEN} ml={11}>最新：</T>
      <T s={37} c={GREEN} ls={-0.3}>15.22</T>
      <T s={37} c={GREEN} ml={20} ls={-0.3}>-0.04</T>
      <T s={37} c={GREEN} ml={19} ls={-0.3}>-0.26%</T>
    </Legend>

    <ChartBox>
      <Watermark>东方财富</Watermark>
      <PriceChart />
      <AxisLabel y={796.5} c={RED}>15.67</AxisLabel>
      <AxisLabel y={941} c={RED}>15.47</AxisLabel>
      <AxisLabel y={1110} c="#999">15.26</AxisLabel>
      <AxisLabel y={1280} c={GREEN}>15.06</AxisLabel>
      <AxisLabel y={1423.5} c={GREEN}>14.85</AxisLabel>
      <AxisLabel side="r" y={796.5} c={RED}>2.69%</AxisLabel>
      <AxisLabel side="r" y={941} c={RED}>1.34%</AxisLabel>
      <AxisLabel side="r" y={1110} c="#999">0.00%</AxisLabel>
      <AxisLabel side="r" y={1280} c={GREEN}>{withDashes("-1.34%")}</AxisLabel>
      <AxisLabel side="r" y={1423.5} c={GREEN}>{withDashes("-2.69%")}</AxisLabel>
      <AxisLabel x={21} s={30} y={901} c={RED}>笼子价格上限：15.54</AxisLabel>
      <AxisLabel x={21} s={30} y={1365} c={GREEN}>笼子价格下限：14.92</AxisLabel>
      <PriceTag>15.351</PriceTag>
      <Trade buy x={698} y={1101}>B</Trade>
      <Trade buy x={697} y={1142}>B</Trade>
      <Trade buy x={877} y={1273}>B</Trade>
      <Trade buy x={927} y={1233}>B</Trade>
      <Trade x={905} y={1108}>S</Trade>
    </ChartBox>

    <VolumeHead>
      <VolumeSelect>成交量<SelectCaret /></VolumeSelect>
      <T s={36.5} ls={-0.2} ml={3}>64171</T>
      <T s={36} ml={43}>分时量:144↑</T>
      <T s={36} ml={43}>现量:</T>
      <T s={37} c={GREEN}>19</T>
    </VolumeHead>
    <VolumeBox>
      <VolumeChart />
      <VolumeMax>3077</VolumeMax>
      <Expand width="70" height="70" viewBox="-35 -35 70 70">
        <circle r="34.5" fill="#fdf0e8" />
        <path d="M-15.5 -1.5V-15.5H-1M-15 -15L-3 -3.5M15 1.5V15H1M14.5 14.5L3 4" fill="none" stroke="#d9601c" strokeWidth="3.2" />
      </Expand>
    </VolumeBox>
    <Dates>
      {["11/17", "11/18", "11/19", "11/20", "11/21"].map((d) => <DateCell key={d}>{d}</DateCell>)}
    </Dates>
    <DateRule />

    <Banner>
      <svg width="48" height="40" viewBox="0 0 48 40">
        <path d="M46.5 0V40H42.5V36L31 33.5L28.5 37L18 34.5L15 28.5L10.5 27V11.5L42.5 3V0z" fill="#ea5504" />
        <rect x="1" y="12" width="4" height="15" fill="#ea5504" />
      </svg>
      <BannerText>大家在炒什么？来问妙想!</BannerText>
      <BannerRule />
      <svg width="33" height="33" viewBox="0 0 33 33"><path d="M2 1.5L31 31.5M31 1.5L2 31.5" stroke={ORANGE} strokeWidth="3" /></svg>
    </Banner>

    <ContentTabs>
      {["股吧", "盘口", "资讯", "公告", "研报", "财务", "资料"].map((t, i) => (
        <ContentTab key={t} on={i === 0}>{t}{i === 0 && <Underline />}</ContentTab>
      ))}
    </ContentTabs>

    <Cards>
      <Card>
        <CardArt width="498" height="200" viewBox="0 0 498 200">
          <path d="M289 0H498V200H242V32H289z" fill="#fdeeea" fillOpacity=".65" />
          <path d="M342 24H463L470 200H278V82H337z" fill="#fffaf8" />
          <path d="M364 53H439L442 200H312V101H362z" fill="#fce9e6" />
          <path d="M384 108L415 99V200H384z" fill="#fff7f5" />
        </CardArt>
        <CardHead>
          <Disc>
            <svg width="32" height="28" viewBox="0 0 32 28">
              <path d="M2 9H8L7 26H1zM10 1H22L23 26H9zM24 14H29L31 26H25z" fill="#fff" />
              <path d="M13.5 10L17 8V18" fill="none" stroke="#dc6560" strokeWidth="2.5" />
            </svg>
          </Disc>
          <CardTitle>人气榜</CardTitle>
          <svg width="15" height="26" viewBox="0 0 15 26"><path d="M2 2L13 13L2 24" fill="none" stroke="#aaa" strokeWidth="2.8" /></svg>
        </CardHead>
        <RankLine>A股市场排名第<RankNumber>2239</RankNumber>名</RankLine>
      </Card>
      <Card>
        <CardArt width="498" height="200" viewBox="0 0 498 200">
          <path d="M255 0H498V200H275z" fill="#fdefeb" fillOpacity=".85" />
        </CardArt>
        <VsGhost>VS</VsGhost>
        <CardHead>
          <Disc>VS</Disc>
          <CardTitle>多空看盘</CardTitle>
        </CardHead>
        <VoteBar><VoteHalf c="#fbdcd9" /><VoteHalf c="#d8eddc" /></VoteBar>
      </Card>
    </Cards>

    <ActionBar>
      <Industry>
        <UpCaret />
        <IndustryValue>523.44</IndustryValue>
        <IndustryRow>
          <T s={38} c={GREY}>环保行业</T>
          <T s={36} c={GREEN} ml={7} ls={-0.8}>-3.41%</T>
        </IndustryRow>
      </Industry>
      <Action>
        <svg {...BOTTOM_ICON}>
          <path d="M-16.5 -23.5A28 28 0 0 1 26 11M17.5 22.5A28 28 0 0 1 -25.5 -12M-32 -10.5L-24 -14L-26.5 -4M32 10L24 14.5L26.5 4" />
          <path d="M-10 -13L0 -2.5L10 -13M0 -2.5V15.5M-10.5 -2.5H10.5M-10.5 7H10.5" strokeWidth="3" />
        </svg>
        <ActionText>交易</ActionText>
      </Action>
      <Action>
        <svg {...BOTTOM_ICON}>
          <path d="M11 -26H-18Q-26 -26 -26 -18V18Q-26 26 -18 26H17Q25 26 25 18V-10" />
          <path d="M-9 10L-6 3L16 -19L20 -15L-3 7z" fill="#666" strokeWidth="1.5" />
          <path d="M19 -22L22 -25Q25 -26 25.5 -22L22.5 -18.5z" fill="#666" strokeWidth="1.5" />
        </svg>
        <ActionText>发帖</ActionText>
      </Action>
      <Action>
        <svg {...BOTTOM_ICON}>
          <rect x="-24.5" y="-24" width="22" height="22" rx="3" />
          <rect x="-24.5" y="3.5" width="22" height="22" rx="3" />
          <rect x="3" y="3.5" width="22" height="22" rx="3" />
          <rect x="5" y="-22" width="18.5" height="18.5" rx="3" transform="rotate(45 14.2 -12.8)" />
        </svg>
        <ActionText>功能</ActionText>
      </Action>
      <Action>
        <svg {...BOTTOM_ICON}>
          <circle r="27" />
          <g fill="#666" stroke="none"><circle cx="-12" r="3.2" /><circle r="3.2" /><circle cx="12" r="3.2" /></g>
        </svg>
        <ActionText>设自选</ActionText>
      </Action>
    </ActionBar>

    <SystemNav>
      <svg width="48" height="52" viewBox="0 0 48 52"><path d="M42 5.5V46.5Q42 49 39.5 47.5L5.5 28Q3.5 26 5.5 24L39.5 4.5Q42 3.5 42 5.5z" fill="none" stroke="#d0d0d0" strokeWidth="4" /></svg>
      <svg width="52" height="52" viewBox="-26 -26 52 52"><circle r="22" fill="none" stroke="#d0d0d0" strokeWidth="4" /></svg>
      <svg width="48" height="52" viewBox="-24 -26 48 52"><rect x="-20" y="-20" width="40" height="40" rx="2" fill="none" stroke="#d0d0d0" strokeWidth="4" /></svg>
    </SystemNav>
  </Page>
);

export default App;
